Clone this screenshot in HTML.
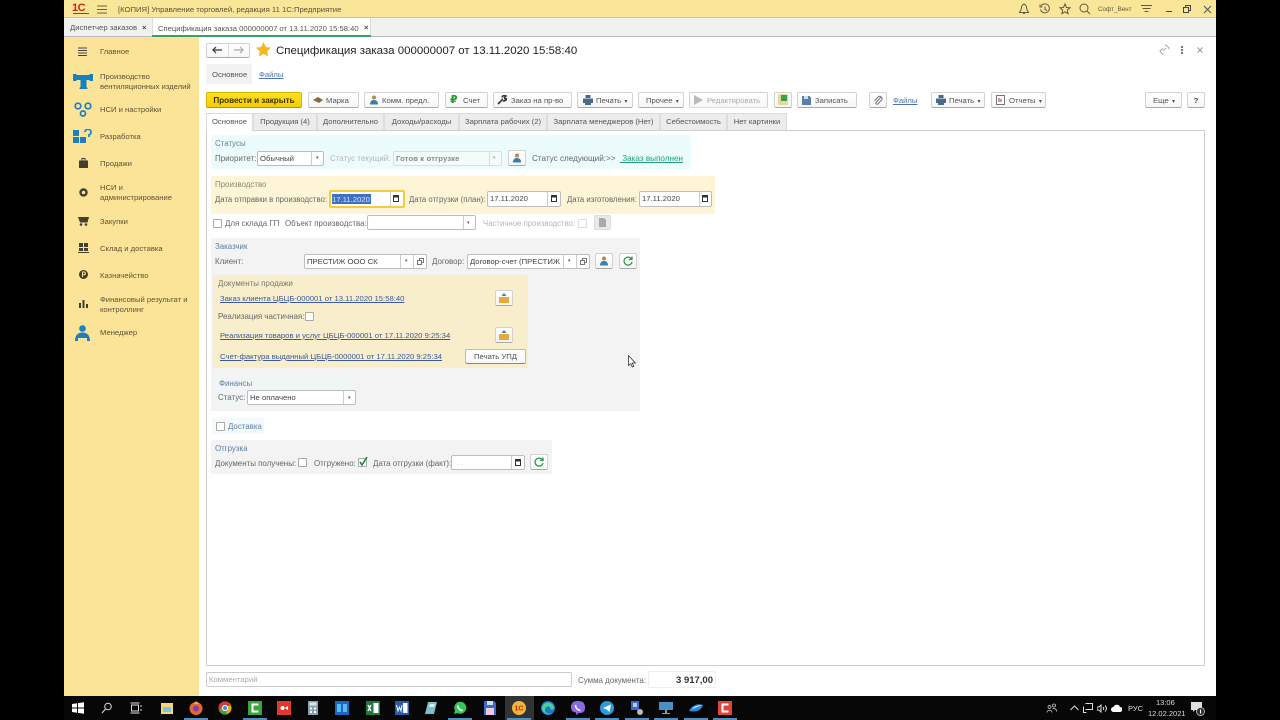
<!DOCTYPE html>
<html><head><meta charset="utf-8"><style>
html,body{margin:0;padding:0;background:#000;width:1280px;height:720px;overflow:hidden}
#p{position:relative;width:1280px;height:720px;background:#000;overflow:hidden;font-family:"Liberation Sans","DejaVu Sans",sans-serif;font-size:7.7px;color:#4a4a4a;filter:blur(.35px)}
#p div,#p a,#p svg{position:absolute}
.t{white-space:nowrap;line-height:12px;margin-top:1px}
.b{box-sizing:border-box;background:linear-gradient(#fff,#f6f6f6);border:1px solid #d2d2d2;border-bottom:1px solid #aaa;border-radius:2px;height:16px;line-height:15px;text-align:left;white-space:nowrap;color:#555}
.f{box-sizing:border-box;background:#fff;border:1px solid #bdbdbd;border-radius:2px;height:15px;line-height:13px;padding-left:2px;white-space:nowrap;color:#444;overflow:hidden}
.tab{box-sizing:border-box;top:113px;height:17px;background:#ececec;border:1px solid #dcdcdc;border-bottom:none;line-height:15px;text-align:center;white-space:nowrap;color:#555;font-size:7.65px}
.l{color:#3c5a9a;text-decoration:underline;white-space:nowrap;line-height:12px;margin-top:1px}
.h{color:#5f7fa8;white-space:nowrap;line-height:12px;font-size:7.9px;margin-top:1px}
.g{color:#666;font-size:7.95px}
.c{box-sizing:border-box;width:9px;height:9px;background:#fff;border:1px solid #a9a9a9;border-radius:1px}
.side{color:#5d5436;line-height:9.5px;white-space:nowrap;left:100px;font-size:7.65px}
.tb{top:701px;width:14px;height:14px}
.u{top:718px;height:2px;background:#4f8fc0}
</style></head><body><div id="p">

<!-- top bar -->
<div style="left:64px;top:0;width:1152px;height:18px;background:#f9e699;border-bottom:1px solid #d9c77f;box-sizing:border-box"></div>
<div class="t" style="left:72px;top:1px;color:#d0261c;font-weight:bold;font-size:11px;letter-spacing:-.5px">1С</div>
<div style="left:73px;top:13px;width:16px;height:1px;background:#d0261c"></div>
<svg style="left:97px;top:5px" width="10" height="9"><path d="M0 1h10M0 4.500h10M0 8h10" stroke="#6b6345" stroke-width="1"/></svg>
<div class="t" style="left:118px;top:3px;color:#5a5235">[КОПИЯ] Управление торговлей, редакция 11 1С:Предприятие</div>
<svg style="left:1018px;top:3px" width="12" height="12" fill="none" stroke="#5f5a40"><path d="M6 1C3.500 2 3.500 4 3 7L1.500 9.500h9L9 7C8.500 4 8.500 2 6 1zM5 10.500h2"/></svg>
<svg style="left:1039px;top:3px" width="12" height="12" fill="none" stroke="#5f5a40"><path d="M2 3A4.500 4.500 0 1 1 1.500 6.500M1 1.500V4h2.500M6 3.500V6.500L8 7.500"/></svg>
<svg style="left:1059px;top:3px" width="12" height="12" fill="none" stroke="#5f5a40"><path d="M6 1l1.500 3.500 3.500.3-2.700 2.400.8 3.500L6 8.800 2.900 10.700l.8-3.500L1 4.800l3.500-.3z"/></svg>
<svg style="left:1079px;top:3px" width="12" height="12" fill="none" stroke="#5f5a40"><circle cx="5" cy="5" r="4"/><path d="M8 8l3 3"/></svg>
<div class="t" style="left:1098px;top:3px;font-size:6.300px;color:#5f5a40">Софт_Вент</div>
<svg style="left:1141px;top:4px" width="11" height="10" stroke="#5f5a40"><path d="M0 1.500h11M1.500 4.500h8M3.500 7.500h4"/></svg>
<div style="left:1166px;top:11px;width:6px;height:1px;background:#444"></div>
<svg style="left:1183px;top:5px" width="8" height="8" fill="none" stroke="#444"><path d="M.5 2.500h5v5h-5zM2.500 2.500v-2h5v5h-2"/></svg>
<svg style="left:1203px;top:5px" width="9" height="9" stroke="#555"><path d="M1 1l7 7M8 1l-7 7"/></svg>

<!-- open tabs row -->
<div style="left:64px;top:18px;width:1152px;height:19px;background:#f1f1f1;border-bottom:1px solid #bbb;box-sizing:border-box"></div>
<div class="t" style="left:70px;top:21px;color:#555">Диспетчер заказов</div>
<div class="t" style="left:142px;top:21px;font-weight:bold;color:#444">×</div>
<div style="left:152px;top:18px;width:219px;height:19px;background:#fff;border-left:1px solid #ddd;border-right:1px solid #ddd;box-sizing:border-box"></div>
<div style="left:152px;top:35px;width:219px;height:2px;background:#38a169"></div>
<div class="t" style="left:158px;top:22px;color:#555;font-size:7.65px">Спецификация заказа 000000007 от 13.11.2020 15:58:40</div>
<div class="t" style="left:364px;top:21px;font-weight:bold;color:#444">×</div>

<!-- sidebar -->
<div style="left:64px;top:37px;width:135px;height:659px;background:#fbe398"></div>
<svg style="left:78px;top:47px" width="9" height="9" stroke="#444"><path d="M0 1h9M0 3.500h9M0 6h9M0 8.500h9"/></svg>
<div class="t side" style="top:45px;line-height:12px">Главное</div>
<svg style="left:73px;top:74px" width="20" height="15"><path d="M0 0h3l1 1h12l1-1h3v7h-3l-1-1h-2.500v7l1 1v1H6.500v-1l1-1V6H4L3 7H0z" fill="#1780c0"/></svg>
<div class="t side" style="top:71px">Производство<br>вентиляционных изделий</div>
<svg style="left:74px;top:102px" width="18" height="15" fill="none" stroke="#1c7fc0" stroke-width="1.700"><circle cx="4" cy="4" r="2.800"/><circle cx="14" cy="4" r="2.800"/><circle cx="9" cy="11.500" r="2.500"/></svg>
<div class="t side" style="top:103px;line-height:12px">НСИ и настройки</div>
<svg style="left:73px;top:129px" width="19" height="15"><path d="M0 1h6v6H0zM0 8h6v6H0zM7 8h6v6H7z" fill="#1c7fc0"/><path d="M12 3a3 3 0 1 1 4 3v2" fill="none" stroke="#2a8fd0" stroke-width="2"/></svg>
<div class="t side" style="top:130px;line-height:12px">Разработка</div>
<svg style="left:79px;top:158px" width="9" height="10"><path d="M0 2.500h9V10H0z" fill="#44402e"/><path d="M3 3V.5h3V3" fill="none" stroke="#44402e"/></svg>
<div class="t side" style="top:157px;line-height:12px">Продажи</div>
<svg style="left:79px;top:188px" width="9" height="9"><circle cx="4.500" cy="4.500" r="3" fill="none" stroke="#44402e" stroke-width="2.400"/></svg>
<div class="t side" style="top:182px">НСИ и<br>администрирование</div>
<svg style="left:78px;top:216px" width="11" height="10"><path d="M0 1h11L9.500 6.500H2z" fill="#44402e"/><circle cx="3" cy="8.500" r="1.300" fill="#44402e"/><circle cx="8" cy="8.500" r="1.300" fill="#44402e"/></svg>
<div class="t side" style="top:215px;line-height:12px">Закупки</div>
<svg style="left:78px;top:243px" width="11" height="10" fill="#44402e"><path d="M1 0h4v4H1zM6 0h4v4H6zM1 5h4v3H1zM6 5h4v3H6zM0 9h11v1H0z"/></svg>
<div class="t side" style="top:242px;line-height:12px">Склад и доставка</div>
<svg style="left:79px;top:270px" width="9" height="9"><circle cx="4.500" cy="4.500" r="4.500" fill="#44402e"/><path d="M3.500 7V2h1.500a1.300 1.300 0 0 1 0 2.800H3" fill="none" stroke="#fbe398"/></svg>
<div class="t side" style="top:269px;line-height:12px">Казначейство</div>
<svg style="left:79px;top:300px" width="9" height="8" fill="#44402e"><path d="M0 3h2v5H0zM3.500 0h2v8h-2zM7 4h2v4H7z"/></svg>
<div class="t side" style="top:294px">Финансовый результат и<br>контроллинг</div>
<svg style="left:75px;top:325px" width="15" height="16" fill="#1c7fc0"><circle cx="7.500" cy="3.500" r="3.300"/><path d="M0 16C0 10 3 7.500 7.500 7.500S15 10 15 16h-3v-3H3v3z"/></svg>
<div class="t side" style="top:326px;line-height:12px">Менеджер</div>

<!-- main -->
<div style="left:199px;top:37px;width:1017px;height:659px;background:#fff"></div>
<div class="b" style="left:206px;top:43px;width:44px;height:15px"></div>
<div style="left:228px;top:44px;width:1px;height:13px;background:#ddd"></div>
<svg style="left:212px;top:46px" width="10" height="8" stroke="#333" fill="none" stroke-width="1.200"><path d="M10 4H1M4 1L1 4l3 3"/></svg>
<svg style="left:234px;top:46px" width="10" height="8" stroke="#aaa" fill="none" stroke-width="1.200"><path d="M0 4h9M6 1l3 3-3 3"/></svg>
<svg style="left:256px;top:42px" width="15" height="15"><path d="M7.500 0l2.300 5 5.200.6-3.800 3.600 1 5.300-4.700-2.600-4.700 2.600 1-5.300L0 5.600 5.200 5z" fill="#f3b91c"/></svg>
<div class="t" style="left:276px;top:43px;font-size:11.470px;line-height:14px;color:#222">Спецификация заказа 000000007 от 13.11.2020 15:58:40</div>
<svg style="left:1159px;top:44px" width="11" height="11" fill="none" stroke="#aaa"><path d="M1 7l3-3M4.500 9.500l-1 .5-2.500-2.500 0-1M6 1.500l1-.5 3 3-.5 1M4 7l3-3"/></svg>
<div style="left:1181px;top:46px;width:2px;height:2px;background:#777"></div><div style="left:1181px;top:49px;width:2px;height:2px;background:#777"></div><div style="left:1181px;top:52px;width:2px;height:2px;background:#777"></div>
<svg style="left:1197px;top:47px" width="6" height="6" stroke="#999"><path d="M.5.500l5 5M5.500.500l-5 5"/></svg>

<div style="left:206px;top:64px;width:46px;height:20px;background:#f2f2f2"></div>
<div class="t" style="left:212px;top:68px;color:#555">Основное</div>
<div class="l" style="left:259px;top:68px;color:#4a73b0">Файлы</div>

<!-- toolbar -->
<div class="b" style="left:206px;top:92px;width:96px;height:16px;background:linear-gradient(#fbe21f,#f7ca05);border-color:#d8b400;border-bottom-color:#b49500;text-align:center;color:#3c3200;font-weight:bold;font-size:8.100px">Провести и закрыть</div>
<div class="b" style="left:308px;top:92px;width:51px;padding-left:17px">Марка</div>
<svg style="left:313px;top:96px" width="11" height="8"><path d="M0 4l5-3 5 3-4 3z" fill="#8a6a3a"/></svg>
<div class="b" style="left:364px;top:92px;width:75px;padding-left:17px">Комм. предл.</div>
<svg style="left:369px;top:95px" width="10" height="10"><circle cx="5" cy="2.500" r="2" fill="#b98b4a"/><path d="M1 9.500C1 6 3 5 5 5s4 1 4 4.500z" fill="#3a7fb0"/></svg>
<div class="b" style="left:445px;top:92px;width:43px;padding-left:17px">Счет</div>
<div class="t" style="left:450px;top:93px;font-size:11px;font-weight:bold;color:#2a9a3a">₽</div>
<div class="b" style="left:493px;top:92px;width:79px;padding-left:17px">Заказ на пр-во</div>
<svg style="left:497px;top:95px" width="10" height="10"><path d="M1 9l5-5M5 2.500A2.500 2.500 0 0 1 9 1L7.500 2.500 8 4l1.500.5L9.500 3A3 3 0 0 1 6 6" stroke="#333" stroke-width="1.600" fill="none"/></svg>
<div class="b" style="left:577px;top:92px;width:56px;padding-left:18px">Печать<span style="font-size:6px"> &nbsp;▾</span></div>
<svg style="left:583px;top:95px" width="10" height="10"><path d="M2.500 0h5v3h-5zM0 3.500h10V8H8v2H2V8H0z" fill="#4a6a8a"/></svg>
<div class="b" style="left:638px;top:92px;width:46px;padding-left:7px">Прочее<span style="font-size:6px"> &nbsp;▾</span></div>
<div class="b" style="left:689px;top:92px;width:79px;padding-left:17px;color:#aaa;border-bottom-color:#ddd">Редактировать</div>
<svg style="left:694px;top:95px" width="9" height="10"><path d="M0 0l9 5-9 5z" fill="#bbb"/></svg>
<div class="b" style="left:774px;top:92px;width:18px"></div>
<svg style="left:778px;top:94px" width="10" height="11"><path d="M0 0h10v11H0z" fill="#e8d8a0"/><path d="M3 1h6v6H3z" fill="#3aa04a"/></svg>
<div class="b" style="left:797px;top:92px;width:60px;padding-left:17px">Записать</div>
<svg style="left:802px;top:96px" width="9" height="9"><path d="M0 0h7.500L9 1.500V9H0z" fill="#5a7fa8"/><path d="M2 0h4v3H2z" fill="#cde"/></svg>
<div class="b" style="left:869px;top:92px;width:18px"></div>
<svg style="left:873px;top:95px" width="10" height="10" fill="none" stroke="#777"><path d="M8 2L3 7.500a1.300 1.300 0 0 0 2 1.500L9 4.500A2.500 2.500 0 0 0 5.500 1.500L1.500 6"/></svg>
<div class="l" style="left:893px;top:94px;color:#4a73b0">Файлы</div>
<div class="b" style="left:931px;top:92px;width:54px;padding-left:17px">Печать<span style="font-size:6px"> &nbsp;▾</span></div>
<svg style="left:936px;top:95px" width="10" height="10"><path d="M2.500 0h5v3h-5zM0 3.500h10V8H8v2H2V8H0z" fill="#4a6a8a"/></svg>
<div class="b" style="left:991px;top:92px;width:55px;padding-left:17px">Отчеты<span style="font-size:6px"> &nbsp;▾</span></div>
<svg style="left:996px;top:95px" width="9" height="10"><path d="M.5.500h8v9h-8z" fill="#fff" stroke="#777"/><path d="M3 3v4M5 4v3" stroke="#a33"/></svg>
<div class="b" style="left:1145px;top:92px;width:37px;padding-left:7px">Еще<span style="font-size:6px"> &nbsp;▾</span></div>
<div class="b" style="left:1187px;top:92px;width:18px;text-align:center;font-weight:bold;color:#444">?</div>

<!-- tabs -->
<div style="left:206px;top:130px;width:999px;height:536px;box-sizing:border-box;border:1px solid #d0d0d0;background:#fff"></div>
<div class="tab" style="left:206px;width:47px;background:#fff;height:18px">Основное</div>
<div class="tab" style="left:253px;width:64px">Продукция (4)</div>
<div class="tab" style="left:317px;width:67px">Дополнительно</div>
<div class="tab" style="left:384px;width:75px">Доходы/расходы</div>
<div class="tab" style="left:459px;width:88px">Зарплата рабочих (2)</div>
<div class="tab" style="left:547px;width:113px">Зарплата менеджеров (Нет)</div>
<div class="tab" style="left:660px;width:67px">Себестоимость</div>
<div class="tab" style="left:727px;width:60px">Нет картинки</div>

<!-- Статусы -->
<div style="left:211px;top:135px;width:480px;height:34px;background:#ecfbfb"></div>
<div class="h" style="left:215px;top:137px">Статусы</div>
<div class="t g" style="left:215px;top:152px">Приоритет:</div>
<div class="f" style="left:257px;top:151px;width:67px">Обычный</div>
<div style="left:311px;top:152px;width:1px;height:13px;background:#ccc"></div>
<div class="t" style="left:316px;top:151px;font-size:5px;color:#555">▾</div>
<div class="t g" style="left:330px;top:152px;color:#b5b5b5">Статус текущий:</div>
<div class="f" style="left:393px;top:151px;width:109px;background:#f3fbfb;border-color:#ddd;color:#8a8a8a;font-weight:bold;letter-spacing:.1px">Готов к отгрузке</div>
<div style="left:489px;top:152px;width:1px;height:13px;background:#ddd"></div>
<div class="t" style="left:493px;top:151px;font-size:5px;color:#aaa">▾</div>
<div class="b" style="left:508px;top:150px;width:18px;height:16px"></div>
<svg style="left:512px;top:153px" width="10" height="10"><circle cx="5" cy="2.500" r="2" fill="#b98b4a"/><path d="M1 9.500C1 6 3 5 5 5s4 1 4 4.500z" fill="#3a7fb0"/></svg>
<div class="t g" style="left:532px;top:152px;font-size:8.150px">Статус следующий:&gt;&gt;</div>
<div class="l" style="left:620px;top:152px;color:#1f9a7a;font-size:8.150px">&nbsp;Заказ выполнен</div>

<!-- Производство -->
<div style="left:211px;top:176px;width:504px;height:38px;background:#fdf5d6"></div>
<div class="h" style="left:215px;top:178px;color:#8a8a6a">Производство</div>
<div class="t g" style="left:215px;top:193px;font-size:7.800px">Дата отправки в производство:</div>
<div class="f" style="left:329px;top:190px;width:76px;height:18px;border:2px solid #f0cc40"></div>
<div style="left:332px;top:194px;width:39px;height:10px;background:#3f6fc0"></div>
<div class="t" style="left:332px;top:193px;color:#dce6f8">17.11.2020</div>
<div style="left:390px;top:192px;width:1px;height:14px;background:#ccc"></div>
<svg style="left:393px;top:195px" width="6" height="7"><path d="M.5.500h5v6h-5z" fill="#fff" stroke="#333"/><path d="M0 0h6v2.500H0z" fill="#333"/></svg>
<div class="t g" style="left:409px;top:193px;font-size:7.800px">Дата отгрузки (план):</div>
<div class="f" style="left:487px;top:191px;width:74px;height:16px;line-height:14px">17.11.2020</div>
<div style="left:547px;top:192px;width:1px;height:14px;background:#ccc"></div>
<svg style="left:551px;top:195px" width="6" height="7"><path d="M.5.500h5v6h-5z" fill="#fff" stroke="#333"/><path d="M0 0h6v2.500H0z" fill="#333"/></svg>
<div class="t g" style="left:567px;top:193px;font-size:7.800px">Дата изготовления:</div>
<div class="f" style="left:639px;top:191px;width:73px;height:16px;line-height:14px">17.11.2020</div>
<div style="left:699px;top:192px;width:1px;height:14px;background:#ccc"></div>
<svg style="left:702px;top:195px" width="6" height="7"><path d="M.5.500h5v6h-5z" fill="#fff" stroke="#333"/><path d="M0 0h6v2.500H0z" fill="#333"/></svg>

<div class="c" style="left:213px;top:219px"></div>
<div class="t g" style="left:225px;top:217px">Для склада ГП</div>
<div class="t g" style="left:285px;top:217px">Объект производства:</div>
<div class="f" style="left:367px;top:215px;width:109px;height:15px"></div>
<div style="left:463px;top:216px;width:1px;height:13px;background:#ccc"></div>
<div class="t" style="left:467px;top:216px;font-size:5px;color:#555">▾</div>
<div class="t g" style="left:483px;top:217px;color:#b5b5b5;font-size:7.800px">Частичное производство:</div>
<div class="c" style="left:578px;top:219px;border-color:#ddd"></div>
<div class="b" style="left:594px;top:215px;width:17px;height:15px;background:#e9e9e9;border-color:#ddd"></div>
<svg style="left:598px;top:218px" width="9" height="9"><path d="M1 0h5l2 2v7H1z" fill="#aaa"/></svg>

<!-- Заказчик -->
<div style="left:211px;top:238px;width:429px;height:173px;background:#f3f3f3"></div>
<div class="h" style="left:215px;top:240px">Заказчик</div>
<div class="t g" style="left:215px;top:255px">Клиент:</div>
<div class="f" style="left:304px;top:254px;width:123px;height:15px">ПРЕСТИЖ ООО СК</div>
<div style="left:400px;top:255px;width:1px;height:13px;background:#ccc"></div>
<div style="left:413px;top:255px;width:1px;height:13px;background:#ccc"></div>
<div class="t" style="left:405px;top:254px;font-size:5px;color:#555">▾</div>
<svg style="left:417px;top:258px" width="7" height="7" fill="none" stroke="#777"><path d="M.5 2.500h4v4h-4zM2.500 2.500V.5h4v4h-2"/></svg>
<div class="t g" style="left:432px;top:255px">Договор:</div>
<div class="f" style="left:467px;top:254px;width:97px;height:15px;font-size:7.700px;border-right:none;border-radius:2px 0 0 2px">Договор-счет (ПРЕСТИЖ</div>
<div class="f" style="left:563px;top:254px;width:27px;height:15px;border-left:none;border-radius:0 2px 2px 0"></div>
<div style="left:563px;top:255px;width:1px;height:13px;background:#ccc"></div>
<div style="left:576px;top:255px;width:1px;height:13px;background:#ccc"></div>
<div class="t" style="left:568px;top:254px;font-size:5px;color:#555">▾</div>
<svg style="left:580px;top:258px" width="7" height="7" fill="none" stroke="#777"><path d="M.5 2.500h4v4h-4zM2.500 2.500V.5h4v4h-2"/></svg>
<div class="b" style="left:595px;top:253px;width:18px;height:16px"></div>
<svg style="left:599px;top:256px" width="10" height="10"><circle cx="5" cy="2.500" r="2" fill="#b98b4a"/><path d="M1 9.500C1 6 3 5 5 5s4 1 4 4.500z" fill="#3a7fb0"/></svg>
<div class="b" style="left:619px;top:253px;width:18px;height:16px"></div>
<svg style="left:623px;top:256px" width="10" height="10" fill="none" stroke="#2e9a4a" stroke-width="1.300"><path d="M8.500 3A4 4 0 1 0 9 6M9 .5V3.500H6"/></svg>

<!-- Документы продажи -->
<div style="left:213px;top:275px;width:315px;height:93px;background:#f8eecb"></div>
<div class="t g" style="left:218px;top:277px;color:#777">Документы продажи</div>
<div class="l" style="left:220px;top:292px">Заказ клиента ЦБЦБ-000001 от 13.11.2020 15:58:40</div>
<div class="b" style="left:495px;top:290px;width:18px;height:16px"></div>
<svg style="left:499px;top:293px" width="10" height="10"><path d="M0 4h10v6H0z" fill="#e8a93a"/><path d="M5 0l2.500 3h-5z" fill="#4a7fa8"/></svg>
<div class="t g" style="left:218px;top:310px">Реализация частичная:</div>
<div class="c" style="left:305px;top:312px"></div>
<div class="l" style="left:220px;top:329px">Реализация товаров и услуг ЦБЦБ-000001 от 17.11.2020 9:25:34</div>
<div class="b" style="left:495px;top:327px;width:18px;height:16px"></div>
<svg style="left:499px;top:330px" width="10" height="10"><path d="M0 4h10v6H0z" fill="#e8a93a"/><path d="M5 0l2.500 3h-5z" fill="#4a7fa8"/></svg>
<div class="l" style="left:220px;top:350px">Счет-фактура выданный ЦБЦБ-0000001 от 17.11.2020 9:25:34</div>
<div class="b" style="left:465px;top:349px;width:61px;height:15px;text-align:center;line-height:13px;border-color:#bbb;border-bottom-color:#888">Печать УПД</div>

<div style="left:215px;top:375px;width:140px;height:33px;background:#f2f5f6"></div>
<div class="h" style="left:219px;top:377px">Финансы</div>
<div class="t g" style="left:218px;top:391px">Статус:</div>
<div class="f" style="left:247px;top:390px;width:109px;height:15px">Не оплачено</div>
<div style="left:343px;top:391px;width:1px;height:13px;background:#ccc"></div>
<div class="t" style="left:348px;top:391px;font-size:5px;color:#555">▾</div>

<!-- Доставка -->
<div style="left:212px;top:418px;width:52px;height:16px;background:#f4f9fb"></div>
<div class="c" style="left:216px;top:422px"></div>
<div class="h" style="left:228px;top:420px">Доставка</div>

<!-- Отгрузка -->
<div style="left:211px;top:440px;width:341px;height:34px;background:#f3f3f3"></div>
<div class="h" style="left:215px;top:442px">Отгрузка</div>
<div class="t g" style="left:215px;top:457px">Документы получены:</div>
<div class="c" style="left:298px;top:458px"></div>
<div class="t g" style="left:314px;top:457px">Отгружено:</div>
<div class="c" style="left:358px;top:458px"></div>
<svg style="left:359px;top:456px" width="9" height="10" fill="none" stroke="#1e8a3c" stroke-width="1.600"><path d="M1 6l2 3 5-8"/></svg>
<div class="t g" style="left:373px;top:457px">Дата отгрузки (факт):</div>
<div class="f" style="left:451px;top:455px;width:74px;height:15px;padding-left:5px;color:#bbb">. .</div>
<div style="left:511px;top:456px;width:1px;height:13px;background:#ccc"></div>
<svg style="left:515px;top:459px" width="6" height="7"><path d="M.5.500h5v6h-5z" fill="#fff" stroke="#333"/><path d="M0 0h6v2.500H0z" fill="#333"/></svg>
<div class="b" style="left:530px;top:454px;width:18px;height:16px"></div>
<svg style="left:534px;top:457px" width="10" height="10" fill="none" stroke="#2e9a4a" stroke-width="1.300"><path d="M8.500 3A4 4 0 1 0 9 6M9 .5V3.500H6"/></svg>

<!-- cursor -->
<svg style="left:628px;top:355px" width="8" height="13"><path d="M.5.500v10l2.300-2 1.500 3.500 1.500-.6-1.500-3.400h3z" fill="#fff" stroke="#333" stroke-width=".8"/></svg>

<!-- footer -->
<div class="f" style="left:206px;top:672px;width:366px;height:15px;line-height:14px;color:#aaa;border-color:#ccc">Комментарий</div>
<div class="t g" style="left:578px;top:674px">Сумма документа:</div>
<div class="f" style="left:648px;top:671px;width:68px;height:17px;border-color:#eee;border-radius:2px;text-align:right;padding-right:2px;line-height:17px;font-weight:bold;font-size:9.500px;color:#333">3 917,00</div>

<!-- taskbar -->
<div style="left:64px;top:696px;width:1152px;height:24px;background:#070707"></div>
<div style="left:505px;top:696px;width:29px;height:24px;background:#333"></div>
<svg style="left:72px;top:702px" width="12" height="12" fill="#fff"><path d="M0 2l5-.7V5.500H0zM6 1.100L12 .2V5.500H6zM0 6.500h5v4.300L0 10zM6 6.500h6v5.300l-6-.9z"/></svg>
<svg style="left:101px;top:702px" width="11" height="12" fill="none" stroke="#ddd"><circle cx="7" cy="4.500" r="3.300"/><path d="M4.500 7L1 11"/></svg>
<svg style="left:130px;top:702px" width="12" height="12" fill="none" stroke="#ddd"><path d="M1.500 3h7v6h-7zM.5 1h9M.5 11h9M11 3v2M11 7v2"/></svg>
<svg class="tb" style="left:160px" width="14" height="14"><path d="M1 2h12v11H1z" fill="#f5d67a"/><path d="M3 6h8v5H3z" fill="#7ec4e8"/></svg>
<svg class="tb" style="left:189px" width="14" height="14"><circle cx="7" cy="7.500" r="6.500" fill="#e8652b"/><circle cx="7" cy="7.500" r="3" fill="#7a3fb0"/><path d="M7 0l3 3H5z" fill="#f7b030"/></svg>
<svg class="tb" style="left:218px" width="14" height="14"><circle cx="7" cy="7" r="6.500" fill="#e0b020"/><path d="M7 .5A6.500 6.500 0 0 0 1.500 10.500L5 5h7.500A6.500 6.500 0 0 0 7 .5z" fill="#d8382e"/><path d="M1.500 10.500A6.500 6.500 0 0 0 8 13.500L10 8 4 8z" fill="#3aa04a"/><circle cx="7" cy="7" r="2.600" fill="#4a8fe0" stroke="#fff"/></svg>
<svg class="tb" style="left:248px" width="14" height="14"><path d="M0 0h14v14H0z" fill="#3aa53a"/><path d="M10.500 3.500h-6v7h6" fill="none" stroke="#fff" stroke-width="2"/></svg>
<svg class="tb" style="left:277px" width="14" height="14"><path d="M0 0h14v14H0z" fill="#e03a30"/><circle cx="5.500" cy="7" r="2" fill="#fff"/><path d="M8 7l3-2v4z" fill="#fff"/></svg>
<svg class="tb" style="left:306px" width="14" height="14"><path d="M2 0h10v14H2z" fill="#8aa0b0"/><path d="M3.500 1.500h7v3h-7z" fill="#d8e8f0"/><path d="M4 6.500h2v2H4zM8 6.500h2v2H8zM4 10h2v2H4zM8 10h2v2H8z" fill="#fff"/></svg>
<svg class="tb" style="left:335px" width="14" height="14"><path d="M0 0h14v14H0z" fill="#1868c0"/><path d="M2 3h4v8H2zM8 3h4v8H8z" fill="#5ab8f0"/></svg>
<svg class="tb" style="left:366px" width="14" height="14"><path d="M0 0h14v14H0z" fill="#1f7a40"/><path d="M7.500 2h5v10h-5z" fill="#fff"/><path d="M2 4l3 6M5 4l-3 6" stroke="#fff" stroke-width="1.300"/></svg>
<svg class="tb" style="left:395px" width="14" height="14"><path d="M0 0h14v14H0z" fill="#2a5aa8"/><path d="M8 2h4.500v10H8z" fill="#fff"/><path d="M1.500 4l1.500 6 1.500-4 1.500 4 1-6" stroke="#fff" fill="none"/></svg>
<svg class="tb" style="left:424px" width="14" height="14"><path d="M4 1h9L10 13H1z" fill="#7cc0c8"/><path d="M6 3h5l-1 3H5z" fill="#d8f0f0"/></svg>
<svg class="tb" style="left:453px" width="14" height="14"><path d="M1 13l1-3.500A6 6 0 1 1 4.500 12z" fill="#35c758"/><path d="M5 4.500C4.500 7 7 9.500 9.500 9.500" stroke="#fff" stroke-width="1.500" fill="none"/></svg>
<svg class="tb" style="left:483px" width="14" height="14"><path d="M1 0h10l2 2v12H1z" fill="#3a6ac8"/><path d="M4 0h6v4H4z" fill="#cde"/><path d="M3 7h8v7H3z" fill="#f0c8e0"/></svg>
<svg class="tb" style="left:512px" width="14" height="14"><circle cx="7" cy="7" r="7" fill="#f2b63a"/><text x="2.500" y="9.500" font-size="7" font-weight="bold" fill="#c8281c" font-family="Liberation Sans">1С</text></svg>
<svg class="tb" style="left:541px" width="14" height="14"><circle cx="7" cy="7" r="7" fill="#1a7ac8"/><path d="M1 8a6 6 0 0 1 12-1c0 2-3 2-4 1 2-3-5-4-5 1 0 3 4 5 8 3a7 7 0 0 1-11-4z" fill="#4ad0a0"/></svg>
<svg class="tb" style="left:571px" width="14" height="14"><path d="M7 0C12 0 14 2 14 6.500S12 12 8 12L5 14v-2.500C1 11 0 9 0 6.500 0 2 2 0 7 0z" fill="#8a6ae0"/><path d="M4.500 4C4.500 7 6.500 9 9.500 9.500" stroke="#fff" stroke-width="1.500" fill="none"/></svg>
<svg class="tb" style="left:600px" width="14" height="14"><circle cx="7" cy="7" r="7" fill="#2a9ad8"/><path d="M3 7l8-3.500L9.500 11 6.500 8.500z" fill="#fff"/></svg>
<svg class="tb" style="left:630px" width="14" height="14"><path d="M1 0h8v9H1z" fill="#3a6ac8"/><path d="M3 2h4v4H3z" fill="#a8d0f0"/><circle cx="10" cy="11" r="3" fill="#bbb"/></svg>
<svg class="tb" style="left:659px" width="14" height="14"><path d="M0 1h14v8H0z" fill="#4a90c8"/><path d="M6 9h2v3h3v1H3v-1h3z" fill="#9aa080"/></svg>
<svg class="tb" style="left:689px" width="14" height="14"><path d="M0 10C3 4 9 2 14 4c-1 4-6 8-14 6z" fill="#2a8ae0"/><path d="M3 8C6 5 10 4 13 4.500 9 5 6 7 3 8z" fill="#fff"/></svg>
<svg class="tb" style="left:718px" width="14" height="14"><path d="M0 0h14v14H0z" fill="#e0453a"/><path d="M10.500 3.500h-6v7h6" fill="none" stroke="#fff" stroke-width="2"/></svg>

<div class="u" style="left:184px;width:24px"></div>
<div class="u" style="left:243px;width:24px"></div>
<div class="u" style="left:448px;width:24px"></div>
<div class="u" style="left:507px;width:24px"></div>
<div class="u" style="left:566px;width:24px"></div>
<div class="u" style="left:595px;width:24px"></div>
<div class="u" style="left:625px;width:24px"></div>
<div class="u" style="left:654px;width:24px"></div>
<div class="u" style="left:684px;width:24px"></div>
<div class="u" style="left:713px;width:24px"></div>

<svg style="left:1046px;top:703px" width="11" height="10" fill="none" stroke="#ccc" stroke-width=".8"><circle cx="3.500" cy="4" r="1.500"/><circle cx="8" cy="2.500" r="1.500"/><path d="M1 9.500c0-3 5-3 5 0M6.500 5.500c2-.5 4 .5 4 3"/></svg>
<svg style="left:1070px;top:705px" width="9" height="6" fill="none" stroke="#ddd"><path d="M.5 5L4.500 1l4 4"/></svg>
<svg style="left:1083px;top:703px" width="10" height="10" fill="none" stroke="#ddd"><path d="M2.500.5h7v6h-7M.5 3.500v6h3"/></svg>
<svg style="left:1097px;top:704px" width="11" height="9" fill="none" stroke="#ddd"><path d="M0 3h2l2-2v7L2 6H0zM6 3c1 1 1 2 0 3M8 1.500c2 2 2 4 0 6"/></svg>
<svg style="left:1111px;top:704px" width="11" height="8"><path d="M2.500 8a2.500 2.500 0 0 1 0-5 3.500 3.500 0 0 1 6.500 0 2.500 2.500 0 0 1 0 5z" fill="#fff"/></svg>
<div class="t" style="left:1128px;top:702px;color:#ddd;font-size:7.500px">РУС</div>
<div class="t" style="left:1156px;top:696px;color:#ddd;font-size:7.500px">13:06</div>
<div class="t" style="left:1148px;top:707px;color:#ddd;font-size:7.500px">12.02.2021</div>
<svg style="left:1191px;top:702px" width="14" height="14"><path d="M0 0h11v8H4L2 10V8H0z" fill="#ddd"/><circle cx="9.500" cy="9.500" r="4" fill="#333" stroke="#ddd" stroke-width=".7"/><path d="M9.500 7.500v4" stroke="#fff"/></svg>

</div></body></html>
